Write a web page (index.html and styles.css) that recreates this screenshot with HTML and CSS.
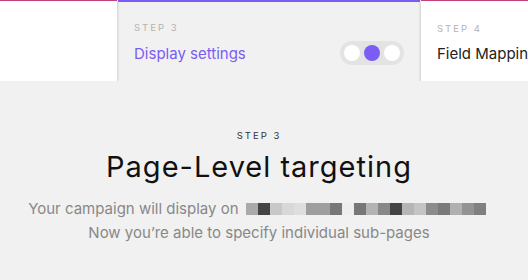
FILE: index.html
```html
<!DOCTYPE html>
<html>
<head>
    <title>Page-Level targeting</title>
    <meta name="viewport" content="width=device-width, initial-scale=1">
    <link rel="stylesheet" href="styles.css">
</head>
<body>
    <div class="steps">
        <div class="step-card step-prev"></div>
        <div class="step-tab active">
            <div class="step-text">
                <div class="step-label">STEP 3</div>
                <div class="step-title">Display settings</div>
            </div>
            <div class="toggle">
                <span class="dot"></span>
                <span class="dot on"></span>
                <span class="dot"></span>
            </div>
        </div>
        <div class="step-card step-next">
            <div class="step-label">STEP 4</div>
            <div class="step-title">Field Mapping</div>
        </div>
    </div>
    <div class="intro">
        <div class="intro-step">STEP 3</div>
        <h1>Page-Level targeting</h1>
        <p class="intro-line domain-line">Your campaign will display on <span class="redacted"><i></i><i></i><i></i><i></i><i></i><i></i><i></i><i></i><i></i><i></i><i></i><i></i><i></i><i></i><i></i><i></i><i></i><i></i><i></i><i></i></span></p>
        <p class="intro-line">Now you’re able to specify individual sub-pages</p>
    </div>
</body>
</html>
```

FILE: styles.css
```css
body {
    margin: 0;
    background: #f1f1f1;
    font-family: 'Inter', 'Liberation Sans', sans-serif;
    overflow: hidden;
}

.steps {
    display: flex;
    height: 81px;
    overflow: hidden;
}

.step-card {
    background: #fff;
    border-top: 1px solid #c2407c;
    box-shadow: 0 1px 3px rgba(0,0,0,0.25);
    box-sizing: border-box;
    padding: 21px 16px 0;
}

.step-prev {
    flex: 0 0 117px;
    margin-right: 1px;
}

.step-next {
    flex: 1;
    margin-left: 1px;
    white-space: nowrap;
}

.step-tab {
    flex: 0 0 302px;
    display: flex;
    align-items: flex-start;
    justify-content: space-between;
    border-top: 2px solid #7b5cf4;
    box-sizing: border-box;
    padding: 19px 16px 0;
}

.step-label {
    font-size: 9.5px;
    letter-spacing: 2px;
    color: #b3b3b3;
    line-height: 14px;
}

.step-title {
    font-size: 15px;
    color: #222;
    margin-top: 8px;
    line-height: 20px;
}

.step-tab .step-title {
    color: #7b5cf4;
    margin-top: 9px;
}

.toggle {
    display: flex;
    gap: 4px;
    padding: 4px;
    margin-top: 20px;
    background: #e3e3e3;
    border-radius: 12px;
}

.dot {
    width: 16px;
    height: 16px;
    border-radius: 50%;
    background: #fff;
}

.dot.on {
    background: #7b5cf4;
}

.intro {
    text-align: center;
    padding: 48px 10px 0 0;
}

.intro-step {
    font-size: 9.5px;
    letter-spacing: 2px;
    color: #333;
    line-height: 14px;
}

h1 {
    margin: 6px 0 0;
    font-size: 29px;
    font-weight: 400;
    letter-spacing: 1px;
    color: #111;
    line-height: 36px;
}

.intro-line {
    margin: 0;
    font-size: 15px;
    color: #888;
    line-height: 24px;
}

.domain-line {
    margin: 12px 4px 0 0;
}

.redacted {
    display: inline-flex;
    vertical-align: -1px;
    margin-left: 3px;
}

.redacted i {
    width: 12px;
    height: 12px;
}

.redacted i:nth-child(1) { background: #aaa; }
.redacted i:nth-child(2) { background: #444; }
.redacted i:nth-child(3) { background: #c8c8c8; }
.redacted i:nth-child(4) { background: #d8d8d8; }
.redacted i:nth-child(5) { background: #dedede; }
.redacted i:nth-child(6) { background: #9e9e9e; }
.redacted i:nth-child(7) { background: #9e9e9e; }
.redacted i:nth-child(8) { background: #777; }
.redacted i:nth-child(9) { background: #eee; }
.redacted i:nth-child(10) { background: #777; }
.redacted i:nth-child(11) { background: #b3b3b3; }
.redacted i:nth-child(12) { background: #888; }
.redacted i:nth-child(13) { background: #444; }
.redacted i:nth-child(14) { background: #b5b5b5; }
.redacted i:nth-child(15) { background: #c4c4c4; }
.redacted i:nth-child(16) { background: #8c8c8c; }
.redacted i:nth-child(17) { background: #7a7a7a; }
.redacted i:nth-child(18) { background: #b0b0b0; }
.redacted i:nth-child(19) { background: #939393; }
.redacted i:nth-child(20) { background: #808080; }
```
